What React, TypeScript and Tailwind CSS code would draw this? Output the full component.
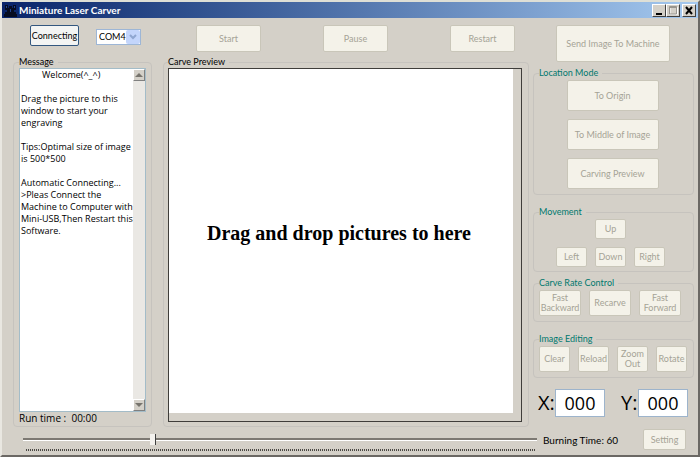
import { useState } from "react";
import type { ButtonHTMLAttributes, ReactNode } from "react";
import clsx from "clsx";

const WELCOME = `         Welcome(^_^)

Drag the picture to this
window to start your
engraving

Tips:Optimal size of image
is 500*500

Automatic Connecting...
>Pleas Connect the
Machine to Computer with
Mini-USB,Then Restart this
Software.`;

// ─── Small controls ─────────────────────────────────────────

const PanelButton = ({
  className,
  ...props
}: ButtonHTMLAttributes<HTMLButtonElement>) => (
  <button
    type="button"
    disabled
    className={clsx(
      "flex shrink-0 items-center justify-center rounded-xs border border-[#c9c6b9] bg-[#f4f2e9] text-center text-[9px] leading-[10px] text-[#a5a396]",
      className,
    )}
    {...props}
  />
);

interface GroupProps {
  title: string;
  accent?: boolean;
  className?: string;
  children: ReactNode;
}

const Group = ({ title, accent, className, children }: GroupProps) => (
  <fieldset
    className={clsx("min-w-0 rounded-sm border border-[#c6c3be] px-[5px]", className)}
  >
    <legend
      className={clsx(
        "pr-1 text-[9px] leading-[12px]",
        accent ? "text-[#00786e]" : "text-black",
      )}
    >
      {title}
    </legend>
    {children}
  </fieldset>
);

const CaptionButton = ({ label, children }: { label: string; children: ReactNode }) => (
  <button
    type="button"
    aria-label={label}
    className="flex h-[13px] w-[14px] items-center justify-center border border-t-white border-r-[#404040] border-b-[#404040] border-l-white bg-[#d4d0c8]"
  >
    {children}
  </button>
);

const ScrollButton = ({ label, path }: { label: string; path: string }) => (
  <button
    type="button"
    aria-label={label}
    className="flex h-3 w-3 items-center justify-center border border-t-white border-r-[#808080] border-b-[#808080] border-l-white bg-[#d4d0c8]"
  >
    <svg viewBox="0 0 8 4" className="h-1 w-2" fill="#77746d">
      <path d={path} />
    </svg>
  </button>
);

const Coordinate = ({ axis }: { axis: string }) => (
  <label className="flex items-center font-['Open_Sans',sans-serif] text-[20px] leading-[28px]">
    <span className="w-[17px]">{axis}:</span>
    <input
      type="text"
      defaultValue="000"
      className="h-7 w-[50px] border border-[#9db4cc] bg-white text-center text-[18px] leading-[26px] outline-none"
    />
  </label>
);

// ─── Window ─────────────────────────────────────────────────

const TitleBar = () => (
  <header className="flex h-4 items-center bg-linear-to-r from-[#0a246a] to-[#a6caf0] pr-[2px] pl-[2px]">
    <svg viewBox="0 0 13 13" className="h-[13px] w-[13px]" fill="#070d22">
      <path d="M1 1h3v3h1V2h3v2h1V1h3v5h-2v2h2v2h1v3H0v-3h1V8h2V6H1z" />
      <path d="M2 2h1v2H2zM6 5h1v3H6zM10 2h1v2h-1z" fill="#23468f" />
    </svg>
    <h1 className="ml-[2px] flex-1 text-[10px] leading-[16px] font-bold text-white">
      Miniature Laser Carver
    </h1>
    <CaptionButton label="Minimize">
      <svg viewBox="0 0 12 11" className="h-[11px] w-3">
        <path d="M3 8h6v2H3z" fill="#000" />
      </svg>
    </CaptionButton>
    <CaptionButton label="Maximize">
      <svg viewBox="0 0 12 11" className="h-[11px] w-3" fill="none">
        <path d="M3 2.5h7.5v7H3z" stroke="#fff" />
        <path d="M2.5 1.5h7v7.5h-7zM2 2.5h8" stroke="#98958e" />
      </svg>
    </CaptionButton>
    <span className="w-[2px]" />
    <CaptionButton label="Close">
      <svg viewBox="0 0 12 11" className="h-[11px] w-3" fill="none">
        <path d="M3 2l6 7M9 2l-6 7" stroke="#000" strokeWidth="2" />
      </svg>
    </CaptionButton>
  </header>
);

const Toolbar = () => (
  <div className="flex h-[27px] items-start pr-[14px] pl-[17px]">
    <button
      type="button"
      className="h-[21px] w-[49px] rounded-xs border border-[#33577f] bg-[#f3f4f3] text-[9px] leading-[10px] whitespace-nowrap text-black"
    >
      Connecting
    </button>
    <div className="relative mt-1 ml-[17px]">
      <select
        aria-label="Port"
        className="block h-4 w-[45px] appearance-none border border-[#9db6d6] bg-white pl-[2px] text-[9px] leading-[14px] outline-none"
      >
        <option>COM4</option>
      </select>
      <span className="pointer-events-none absolute inset-y-px right-px flex w-[14px] items-center justify-center rounded-xs bg-[#c3d5fb]">
        <svg viewBox="0 0 8 6" className="h-[6px] w-2" fill="none">
          <path d="M1 1l3 3 3-3" stroke="#8fa6d0" strokeWidth="2" />
        </svg>
      </span>
    </div>
    <div className="ml-[55px] flex flex-1 justify-between">
      <PanelButton className="h-[27px] w-[65px]">Start</PanelButton>
      <PanelButton className="h-[27px] w-[65px]">Pause</PanelButton>
      <PanelButton className="h-[27px] w-[65px]">Restart</PanelButton>
    </div>
  </div>
);

const MessageGroup = () => (
  <Group title="Message" className="flex w-[139px] shrink-0 flex-col">
    <div className="flex h-[344px] border border-[#a3bcc8] bg-white">
      <textarea
        readOnly
        aria-label="Message"
        value={WELCOME}
        className="block h-full min-w-0 flex-1 resize-none overflow-hidden pl-px font-['Open_Sans',sans-serif] text-[9px] leading-[12px] whitespace-pre text-black outline-none"
      />
      <div className="flex w-3 flex-col justify-between bg-[#eae8e4]">
        <ScrollButton label="Scroll up" path="M4 0l4 4H0z" />
        <ScrollButton label="Scroll down" path="M0 0h8L4 4z" />
      </div>
    </div>
    <p className="font-['Open_Sans',sans-serif] text-[10px] leading-[12px] whitespace-pre">
      Run time :  00:00
    </p>
  </Group>
);

const PreviewGroup = () => (
  <Group title="Carve Preview" className="flex flex-1 flex-col pr-[6px] pb-1 pl-1">
    <div className="h-[354px] border border-[#3f3d3a] pr-2 pb-2">
      <div className="flex h-full items-center justify-center bg-white pr-1 pb-4">
        <p className="font-['Liberation_Serif',serif] text-[20px] leading-[24px] font-bold text-black">
          Drag and drop pictures to here
        </p>
      </div>
    </div>
  </Group>
);

const SidePanel = () => (
  <aside className="flex w-[161px] shrink-0 flex-col">
    <PanelButton className="ml-[23px] h-[37px] w-[114px]">Send Image To Machine</PanelButton>

    <Group title="Location Mode" accent className="mt-[5px]">
      <div className="flex flex-col items-center gap-2 pt-px pr-[2px] pb-[5px]">
        <PanelButton className="h-[31px] w-[92px]">To Origin</PanelButton>
        <PanelButton className="h-[31px] w-[92px]">To Middle of Image</PanelButton>
        <PanelButton className="h-[31px] w-[92px]">Carving Preview</PanelButton>
      </div>
    </Group>

    <Group title="Movement" accent className="mt-[11px]">
      <div className="flex flex-col items-center gap-2 pt-px pr-[6px] pb-1">
        <PanelButton className="h-5 w-[31px]">Up</PanelButton>
        <div className="flex gap-2">
          <PanelButton className="h-5 w-[31px]">Left</PanelButton>
          <PanelButton className="h-5 w-[31px]">Down</PanelButton>
          <PanelButton className="h-5 w-[31px]">Right</PanelButton>
        </div>
      </div>
    </Group>

    <Group title="Carve Rate Control" accent className="mt-[5px]">
      <div className="flex gap-2 pt-px pb-[5px]">
        <PanelButton className="h-[26px] w-[42px]">Fast<br />Backward</PanelButton>
        <PanelButton className="h-[26px] w-[42px]">Recarve</PanelButton>
        <PanelButton className="h-[26px] w-[42px]">Fast<br />Forward</PanelButton>
      </div>
    </Group>

    <Group title="Image Editing" accent className="mt-[11px]">
      <div className="flex gap-2 pt-px pb-[5px]">
        <PanelButton className="h-[26px] w-[31px]">Clear</PanelButton>
        <PanelButton className="h-[26px] w-[31px]">Reload</PanelButton>
        <PanelButton className="h-[26px] w-[31px]">Zoom<br />Out</PanelButton>
        <PanelButton className="h-[26px] w-[31px]">Rotate</PanelButton>
      </div>
    </Group>

    <div className="mt-[11px] flex justify-between pr-[6px] pl-[5px]">
      <Coordinate axis="X" />
      <Coordinate axis="Y" />
    </div>
  </aside>
);

const BurningTime = () => {
  const [time, setTime] = useState(60);

  return (
    <footer className="mt-px flex items-center pr-3 pl-[21px]">
      <div className="flex-1 pt-[2px]">
        <input
          id="burning-time"
          type="range"
          min={0}
          max={240}
          value={time}
          onChange={(e) => setTime(Number(e.target.value))}
          className="block h-[19px] w-full appearance-none bg-transparent [&::-webkit-slider-runnable-track]:h-[3px] [&::-webkit-slider-runnable-track]:border-t-2 [&::-webkit-slider-runnable-track]:border-t-[#7d7973] [&::-webkit-slider-runnable-track]:bg-white [&::-webkit-slider-thumb]:-mt-[6px] [&::-webkit-slider-thumb]:h-[11px] [&::-webkit-slider-thumb]:w-[6px] [&::-webkit-slider-thumb]:appearance-none [&::-webkit-slider-thumb]:border-r [&::-webkit-slider-thumb]:border-r-[#404040] [&::-webkit-slider-thumb]:bg-[#f4f2ee]"
        />
        {/* tick marks */}
        <div className="mr-[2px] ml-[3px] h-[2px] bg-[repeating-linear-gradient(90deg,#4a4844_0_1px,transparent_1px_2px)]" />
      </div>
      <label
        htmlFor="burning-time"
        className="ml-[6px] w-[100px] text-[10px] leading-[14px] whitespace-nowrap"
      >
        Burning Time: {time}
      </label>
      <PanelButton className="h-[21px] w-[43px]">Setting</PanelButton>
    </footer>
  );
};

export default function App() {
  return (
    <div className="flex min-h-screen flex-col border-2 border-t-[#dedfd6] border-r-[#6b6864] border-b-[#6b6864] border-l-[#e9e7e1] bg-[#d4d0c8] font-['Lato',sans-serif] text-black">
      <TitleBar />
      <main className="flex gap-1 pt-[7px] pr-1 pl-[11px]">
        <div className="flex min-w-0 flex-1 flex-col">
          <Toolbar />
          <div className="mt-1 flex gap-[11px]">
            <MessageGroup />
            <PreviewGroup />
          </div>
        </div>
        <SidePanel />
      </main>
      <BurningTime />
    </div>
  );
}
